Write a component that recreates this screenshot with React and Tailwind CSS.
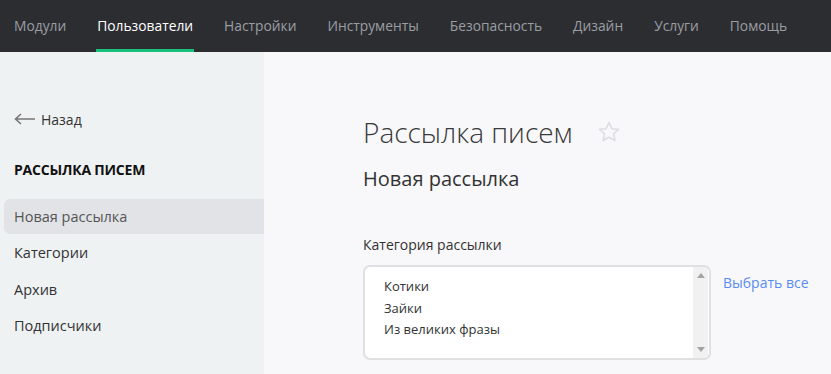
import React from "react";

const nav = ["Модули", "Пользователи", "Настройки", "Инструменты", "Безопасность", "Дизайн", "Услуги", "Помощь"];

export default function App() {
  return (
    <div className="w-[831px] h-[374px] overflow-hidden flex flex-col bg-[#f8f8fa]" style={{ fontFamily: '"Open Sans", sans-serif' }}>
      <div className="h-[52px] bg-[#2c2d31] flex items-stretch pl-[14px] gap-[31px] shrink-0">
        {nav.map((n, i) => (
          <div key={n} className={`relative flex items-center text-[13.8px] ${i === 1 ? "text-white" : "text-[#9a9ea3]"}`}>
            {n}
            {i === 1 && <div className="absolute left-[-1px] right-[-1px] bottom-0 h-[3px] bg-[#19c27a]" />}
          </div>
        ))}
      </div>
      <div className="flex flex-1 min-h-0">
        <div className="w-[264px] bg-[#eff2f3] shrink-0 pt-[57px] pl-[4px]">
          <div className="flex items-center gap-[5px] pl-[10px] text-[14px] text-[#333] h-[20px]">
            <svg width="22" height="12" viewBox="0 0 22 12" fill="none" stroke="#777" strokeWidth="1.6">
              <path d="M21 6H2M7 1L1.5 6L7 11" />
            </svg>
            <span>Назад</span>
          </div>
          <div className="mt-[30px] pl-[10px] text-[14px] font-bold text-[#111] h-[20px] flex items-center tracking-[-0.2px]">РАССЫЛКА ПИСЕМ</div>
          <div className="mt-[20px] flex flex-col text-[14.5px] text-[#333]">
            <div className="h-[35px] flex items-center pl-[10px] bg-[#e1e3e6] rounded-l-[6px] text-[#555]">Новая рассылка</div>
            <div className="h-[38px] flex items-center pl-[10px]">Категории</div>
            <div className="h-[36px] flex items-center pl-[10px]">Архив</div>
            <div className="h-[36px] flex items-center pl-[10px]">Подписчики</div>
          </div>
        </div>
        <div className="flex-1 pl-[99px] pt-[60px]">
          <div className="flex items-center gap-[25px] h-[40px]">
            <h1 className="text-[28px] font-light text-[#3a3a3a] leading-none">Рассылка писем</h1>
            <svg width="24" height="24" viewBox="0 0 24 24" fill="none" stroke="#dcdee2" strokeWidth="1.6" strokeLinejoin="round">
              <path d="M12 2.5l2.9 6.2 6.6.7-4.9 4.5 1.4 6.6L12 17.2l-5.9 3.3 1.4-6.6-4.9-4.5 6.6-.7z" />
            </svg>
          </div>
          <h2 className="mt-[13px] text-[20px] text-[#333] leading-[28px]">Новая рассылка</h2>
          <div className="mt-[42px] text-[14px] text-[#333] leading-[20px]">Категория рассылки</div>
          <div className="mt-[10px] flex items-start gap-[12px]">
            <div className="w-[348px] h-[95px] bg-white border-2 border-[#e0e0e3] rounded-[7px] flex overflow-hidden">
              <div className="flex-1 pl-[19px] pt-[9px] text-[13px] text-[#333] leading-[21.5px]">
                <div>Котики</div>
                <div>Зайки</div>
                <div>Из великих фразы</div>
              </div>
              <div className="w-[15px] bg-[#f1f1f1] flex flex-col justify-between items-center py-[6px] mr-[1px]">
                <svg width="8" height="5" viewBox="0 0 8 5"><path d="M4 0L8 5H0z" fill="#a3a3a3" /></svg>
                <svg width="8" height="5" viewBox="0 0 8 5"><path d="M0 0H8L4 5z" fill="#a3a3a3" /></svg>
              </div>
            </div>
            <a className="text-[14px] text-[#5a8cf0] mt-[7px]">Выбрать все</a>
          </div>
        </div>
      </div>
    </div>
  );
}
